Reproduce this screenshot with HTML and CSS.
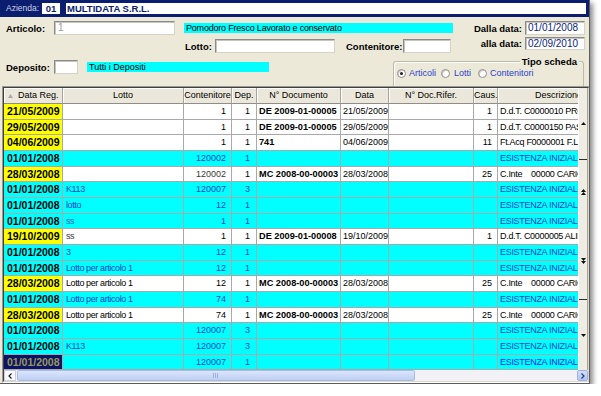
FILE: index.html
```html
<!DOCTYPE html>
<html>
<head>
<meta charset="utf-8">
<link rel="stylesheet" href="styles.css">
</head>
<body>
<div class="win">
  <div class="titlebar">
    <span class="az-label">Azienda:</span>
    <span class="az-code">01</span>
    <span class="az-name">MULTIDATA S.R.L.</span>
  </div>

  <div class="form">
    <div class="frow row-a">
      <span class="lbl w-first">Articolo:</span>
      <div class="inp inp-art">1</div>
      <div class="desc desc-art">Pomodoro Fresco Lavorato e conservato</div>
      <div class="date-grp">
        <span class="lbl">Dalla data:</span>
        <div class="inp date">01/01/2008</div>
      </div>
    </div>

    <div class="frow row-b">
      <div class="lotto-grp">
        <span class="lbl w-lotto">Lotto:</span>
        <div class="inp inp-lotto"></div>
        <span class="lbl w-cont">Contenitore:</span>
        <div class="inp inp-cont"></div>
      </div>
      <div class="date-grp date-grp2">
        <span class="lbl">alla data:</span>
        <div class="inp date date2">02/09/2010</div>
      </div>
    </div>

    <div class="frow row-c">
      <div class="dep-grp">
        <span class="lbl w-first">Deposito:</span>
        <div class="inp inp-dep"></div>
        <div class="desc desc-dep">Tutti i Depositi</div>
      </div>
      <div class="group">
        <span class="legend">Tipo scheda</span>
        <div class="radios">
          <span class="radio on"></span><span class="rlab rl1">Articoli</span>
          <span class="radio"></span><span class="rlab rl2">Lotti</span>
          <span class="radio"></span><span class="rlab">Contenitori</span>
        </div>
      </div>
    </div>
  </div>

  <div class="gridframe">
    <div class="gridinner">
      <div class="main">
        <div class="table">
          <div class="hd">
            <div class="h1"><svg class="sort" width="5" height="4" viewBox="0 0 5 4"><path d="M0 4h5L2.5 0z" fill="#a9a9a9"/></svg>Data Reg.</div>
            <div>Lotto</div>
            <div>Contenitore</div>
            <div>Dep.</div>
            <div>N° Documento</div>
            <div>Data</div>
            <div>N° Doc.Rifer.</div>
            <div>Caus.</div>
            <div class="hds">Descrizione</div>
          </div>
          <div class="body">
            <div class="r w"><div class="d">21/05/2009</div><div class="l"></div><div class="n">1</div><div class="n dp">1</div><div class="doc">DE 2009-01-00005</div><div class="dt">21/05/2009</div><div></div><div class="n">1</div><div class="ds">D.d.T. C0000010 PROVA</div></div>
            <div class="r w"><div class="d">29/05/2009</div><div class="l"></div><div class="n">1</div><div class="n dp">1</div><div class="doc">DE 2009-01-00005</div><div class="dt">29/05/2009</div><div></div><div class="n">1</div><div class="ds">D.d.T. C0000150 PASTA</div></div>
            <div class="r w"><div class="d">04/06/2009</div><div class="l"></div><div class="n">1</div><div class="n dp">1</div><div class="doc">741</div><div class="dt">04/06/2009</div><div></div><div class="n">11</div><div class="ds">Ft.Acq F0000001 F.LLI</div></div>
            <div class="r c"><div class="d">01/01/2008</div><div class="l"></div><div class="n">120002</div><div class="n dp">1</div><div></div><div></div><div></div><div></div><div class="ds">ESISTENZA INIZIALI</div></div>
            <div class="r w"><div class="d">28/03/2008</div><div class="l"></div><div class="n gry">120002</div><div class="n dp">1</div><div class="doc">MC 2008-00-00003</div><div class="dt">28/03/2008</div><div></div><div class="n">25</div><div class="ds">C.Inte    00000 CARICO</div></div>
            <div class="r c"><div class="d">01/01/2008</div><div class="l">K113</div><div class="n">120007</div><div class="n dp">3</div><div></div><div></div><div></div><div></div><div class="ds">ESISTENZA INIZIALI</div></div>
            <div class="r c"><div class="d">01/01/2008</div><div class="l">lotto</div><div class="n">12</div><div class="n dp">1</div><div></div><div></div><div></div><div></div><div class="ds">ESISTENZA INIZIALI</div></div>
            <div class="r c"><div class="d">01/01/2008</div><div class="l gry">ss</div><div class="n">1</div><div class="n dp">1</div><div></div><div></div><div></div><div></div><div class="ds">ESISTENZA INIZIALI</div></div>
            <div class="r w"><div class="d">19/10/2009</div><div class="l gry">ss</div><div class="n">1</div><div class="n dp">1</div><div class="doc">DE 2009-01-00008</div><div class="dt">19/10/2009</div><div></div><div class="n">1</div><div class="ds">D.d.T. C0000005 ALIM</div></div>
            <div class="r c"><div class="d">01/01/2008</div><div class="l">3</div><div class="n">12</div><div class="n dp">1</div><div></div><div></div><div></div><div></div><div class="ds">ESISTENZA INIZIALI</div></div>
            <div class="r c"><div class="d">01/01/2008</div><div class="l">Lotto per articolo 1</div><div class="n">12</div><div class="n dp">1</div><div></div><div></div><div></div><div></div><div class="ds">ESISTENZA INIZIALI</div></div>
            <div class="r w"><div class="d">28/03/2008</div><div class="l">Lotto per articolo 1</div><div class="n">12</div><div class="n dp">1</div><div class="doc">MC 2008-00-00003</div><div class="dt">28/03/2008</div><div></div><div class="n">25</div><div class="ds">C.Inte    00000 CARICO</div></div>
            <div class="r c"><div class="d">01/01/2008</div><div class="l">Lotto per articolo 1</div><div class="n">74</div><div class="n dp">1</div><div></div><div></div><div></div><div></div><div class="ds">ESISTENZA INIZIALI</div></div>
            <div class="r w"><div class="d">28/03/2008</div><div class="l">Lotto per articolo 1</div><div class="n">74</div><div class="n dp">1</div><div class="doc">MC 2008-00-00003</div><div class="dt">28/03/2008</div><div></div><div class="n">25</div><div class="ds">C.Inte    00000 CARICO</div></div>
            <div class="r c"><div class="d">01/01/2008</div><div class="l"></div><div class="n">120007</div><div class="n dp">3</div><div></div><div></div><div></div><div></div><div class="ds">ESISTENZA INIZIALI</div></div>
            <div class="r c"><div class="d">01/01/2008</div><div class="l">K113</div><div class="n">120007</div><div class="n dp">3</div><div></div><div></div><div></div><div></div><div class="ds">ESISTENZA INIZIALI</div></div>
            <div class="r c sel"><div class="d">01/01/2008</div><div class="l"></div><div class="n">120007</div><div class="n dp">1</div><div></div><div></div><div></div><div></div><div class="ds">ESISTENZA INIZIALI</div></div>
          </div>
        </div>
        <div class="vs">
          <div class="seg seg1"><svg width="5" height="3" viewBox="0 0 5 3"><path d="M0 3h5L2.5 0z" fill="#111"/></svg></div>
          <div class="seg seg2">
            <svg width="5" height="6" viewBox="0 0 5 6"><path d="M0 3h5L2.5 0zM0 6h5L2.5 3z" fill="#111"/></svg>
            <svg width="5" height="6" viewBox="0 0 5 6"><path d="M0 0h5L2.5 3zM0 3h5L2.5 6z" fill="#111"/></svg>
          </div>
          <div class="seg seg3"><svg width="5" height="3" viewBox="0 0 5 3"><path d="M0 0h5L2.5 3z" fill="#111"/></svg></div>
        </div>
      </div>
      <div class="hs">
        <div class="btnl"><svg width="4" height="6" viewBox="0 0 4 6"><path d="M3.5 0.5L1 3l2.5 2.5" fill="none" stroke="#222" stroke-width="1.2"/></svg></div>
        <div class="thumb"><svg width="6" height="5" viewBox="0 0 6 5"><path d="M0.5 0v5M2.5 0v5M4.5 0v5" stroke="#9fb2dc" stroke-width="1"/></svg></div>
        <div class="track"></div>
        <div class="btnr"><svg width="4" height="6" viewBox="0 0 4 6"><path d="M0.5 0.5L3 3L0.5 5.5" fill="none" stroke="#2a3c78" stroke-width="1.2"/></svg></div>
      </div>
    </div>
  </div>
</div>
</body>
</html>
```

FILE: styles.css
```css
* { box-sizing: border-box; }
html, body { margin: 0; padding: 0; background: #fff; }
body {
  font-family: "Liberation Sans", Arial, sans-serif;
  font-size: 9px;
  color: #000;
}

.win {
  width: 590px;
  height: 384px;
  background: #ECE9D8;
  border-right: 1px solid #5c5c5c;
  border-bottom: 1px solid #5c5c5c;
  box-shadow: 3px 3px 5px rgba(0, 0, 0, 0.45);
  display: flex;
  flex-direction: column;
  overflow: hidden;
}

/* title bar */
.titlebar {
  flex: none;
  height: 17px;
  background: #0B1D6F;
  display: flex;
  align-items: flex-start;
  padding: 3px 3px 0 6px;
}
.az-label {
  width: 36px;
  color: #CDD2E8;
  font-size: 8.5px;
  line-height: 11px;
}
.az-code {
  width: 18px;
  height: 11px;
  margin-right: 6px;
  background: #fff;
  color: #0B1D6F;
  font-weight: bold;
  font-size: 9.5px;
  line-height: 11px;
  text-align: center;
}
.az-name {
  flex: 1;
  height: 11px;
  background: #fff;
  color: #0B1D6F;
  font-weight: bold;
  font-size: 9.5px;
  line-height: 11px;
  padding-left: 1px;
}

/* form */
.form {
  flex: none;
  height: 69px;
  padding-left: 6px;
  display: flex;
  flex-direction: column;
}
.frow { display: flex; }
.lbl {
  font-weight: bold;
  font-size: 9.5px;
  white-space: nowrap;
}
.w-first { width: 48px; }
.w-lotto { width: 30px; }
.w-cont { width: 57px; margin-left: 11px; }

.inp {
  height: 14px;
  background: #fff;
  border: 1px solid;
  border-color: #8a8a8a #d6d3c6 #d6d3c6 #8a8a8a;
  box-shadow: inset 1px 1px 0 #c8c6bc;
  font-size: 10px;
  line-height: 12px;
  padding-left: 3px;
  white-space: nowrap;
}
.inp-art { width: 121px; color: #9a9a9a; }
.inp-lotto { width: 120px; }
.inp-cont { width: 48px; }
.inp-dep { width: 24px; }

.desc {
  height: 10px;
  background: #00FFFF;
  font-size: 9px;
  line-height: 10px;
  padding-left: 2px;
  white-space: nowrap;
  overflow: hidden;
}
.desc-art { width: 269px; margin-left: 9px; margin-top: -1px; letter-spacing: -0.2px; }
.desc-dep { width: 182px; margin-left: 9px; }

.row-a { margin-top: 4px; height: 14px; align-items: center; }
.row-b { margin-top: 2px; height: 16px; align-items: flex-start; }
.row-c { height: 33px; align-items: flex-start; }

.date-grp {
  margin-left: auto;
  margin-right: 4px;
  display: flex;
  align-items: center;
}
.date-grp .lbl { text-align: right; }
.date {
  width: 60px;
  margin-left: 3px;
  color: #0A1E80;
  padding-left: 2px;
}
.date2 { height: 13px; line-height: 11px; }
.date-grp2 { height: 13px; }

.lotto-grp {
  margin-left: 179px;
  margin-top: 2px;
  height: 14px;
  display: flex;
  align-items: center;
}
.dep-grp {
  margin-top: 7px;
  height: 14px;
  display: flex;
  align-items: center;
}

/* group box */
.group {
  position: relative;
  margin-left: auto;
  margin-right: 5px;
  margin-top: 8px;
  width: 191px;
  height: 25px;
  border: 1px solid #BDBAA9;
  border-bottom: none;
  border-radius: 3px 3px 0 0;
  box-shadow: inset 1px 1px 0 #fff;
}
.legend {
  position: absolute;
  top: -6px;
  right: 4px;
  padding: 0 2px;
  background: #ECE9D8;
  font-weight: bold;
  font-size: 9.5px;
  line-height: 11px;
}
.radios {
  display: flex;
  align-items: center;
  padding: 6px 0 0 3px;
}
.radio {
  width: 9px;
  height: 9px;
  border-radius: 50%;
  border: 1px solid #8e8e8e;
  background: #fff;
  box-shadow: inset 1px 1px 0 #cfcdc2;
  display: flex;
  align-items: center;
  justify-content: center;
  flex: none;
}
.radio.on::after {
  content: "";
  width: 3px;
  height: 3px;
  border-radius: 50%;
  background: #1d1d1d;
}
.rlab {
  margin-left: 3px;
  color: #2B3FCC;
  line-height: 10px;
  white-space: nowrap;
}
.rl1 { width: 32px; }
.rl2 { width: 24px; margin-left: 4px; }

/* grid */
.gridframe {
  flex: none;
  height: 297px;
  margin-left: 2px;
  width: 588px;
  border: 1px solid;
  border-color: #9b9a94 #ffffff #ffffff #9b9a94;
}
.gridinner {
  height: 100%;
  border: 1px solid;
  border-color: #3f3f3f #dcd9cc #dcd9cc #3f3f3f;
  display: flex;
  flex-direction: column;
}
.main {
  height: 282px;
  display: flex;
}
.table {
  width: 574px;
  display: flex;
  flex-direction: column;
  background: #fff;
}
.hd, .r {
  display: grid;
  grid-template-columns: 59px 121px 48px 25px 84px 48px 85px 24px 80px;
}
.hd {
  height: 16px;
  background: #EBE8DB;
}
.hd > div {
  border-right: 1px solid #a6a49b;
  border-bottom: 1px solid #8f8d86;
  box-shadow: inset 1px 1px 0 #fff;
  text-align: center;
  line-height: 15px;
  white-space: nowrap;
  overflow: hidden;
}
.hd .h1 {
  text-align: left;
  padding-left: 4px;
  display: flex;
  align-items: center;
}
.sort { margin-right: 5px; }
.hd .hds {
  text-align: left;
  padding-left: 37px;
  border-right: none;
}

.body {
  height: 266px;
  overflow: hidden;
}
.r { height: 15.67px; }
.r > div {
  border-right: 1px solid #a9a9a9;
  border-bottom: 1px solid #a9a9a9;
  overflow: hidden;
  white-space: pre;
  line-height: 14.67px;
  padding-left: 3px;
}
.r > div:last-child { border-right: none; }
.r.w { background: #fff; color: #000; }
.r.c { background: #00FFFF; color: #1744C6; }
.r .d {
  font-weight: bold;
  font-size: 10.5px;
  color: #000;
  padding-left: 3px;
}
.r.w .d { background: #FFFF00; }
.r.sel .d { background: #0B1466; color: #9C9858; }
.r.sel .ds { color: #1a22ff; }
.r .l { letter-spacing: -0.4px; }
.r .n { text-align: right; padding-right: 5px; padding-left: 0; }
.r .dp { padding-right: 6px; }
.r .doc { font-weight: bold; font-size: 9.2px; padding-left: 2px; }
.r .dt { padding-left: 2px; }
.r .ds { padding-left: 2px; letter-spacing: -0.3px; }
.r.w .gry { color: #3a3a3a; }
.r.c .gry { color: #4660b0; }

/* vertical scroller */
.vs {
  width: 10px;
  display: flex;
  flex-direction: column;
  background: #EFEDE3;
  border-left: 1px solid #fff;
  border-right: 1px solid #a8a698;
}
.seg {
  display: flex;
  align-items: center;
  justify-content: center;
}
.seg1 { height: 72px; border-bottom: 1px solid #2e2e2e; }
.seg2 {
  height: 140px;
  border-bottom: 1px solid #2e2e2e;
  flex-direction: column;
  justify-content: space-between;
  padding: 29px 0 35px;
}
.seg3 { flex: 1; }

/* horizontal scroller */
.hs {
  height: 11px;
  display: flex;
  background: #F2F2F6;
}
.btnl {
  width: 12px;
  background: #F9F9FC;
  border: 1px solid #c9cddc;
  display: flex;
  align-items: center;
  justify-content: center;
}
.thumb {
  width: 398px;
  margin-left: 1px;
  background: linear-gradient(#DCE6FC, #BDCFF5);
  border: 1px solid #A7BBE6;
  border-radius: 2px;
  display: flex;
  align-items: center;
  justify-content: center;
}
.track { flex: 1; }
.btnr {
  width: 11px;
  background: linear-gradient(#D2DEFB, #B1C5F3);
  border: 1px solid #9DB2E4;
  border-radius: 2px;
  display: flex;
  align-items: center;
  justify-content: center;
}
```
